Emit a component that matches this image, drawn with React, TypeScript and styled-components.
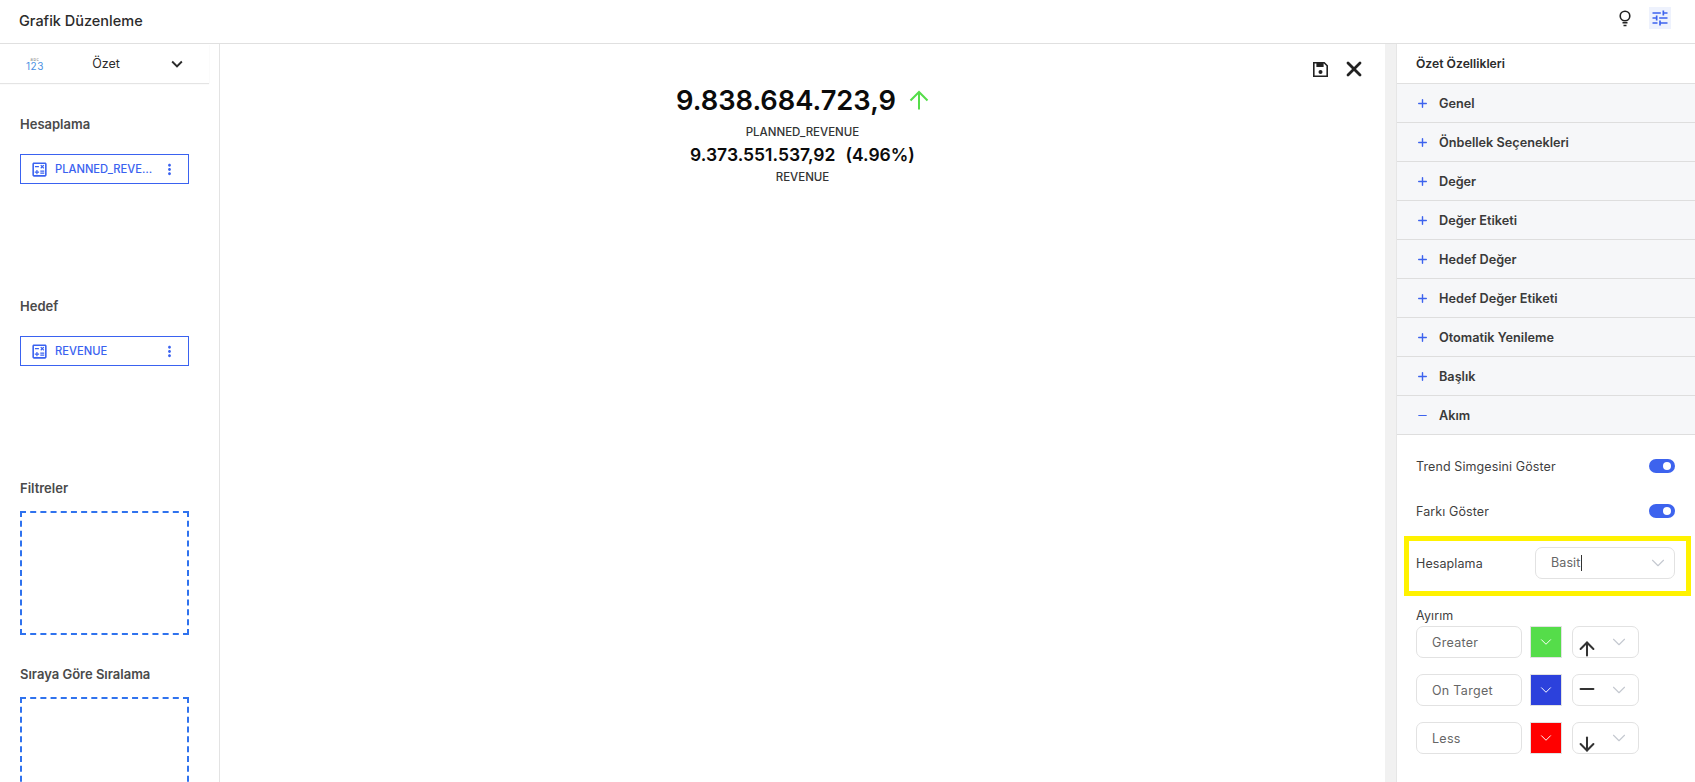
import { ReactNode } from "react";
import styled, { createGlobalStyle } from "styled-components";
import { MdOutlineCalculate, MdOutlineTune, MdMoreVert, MdKeyboardArrowDown } from "react-icons/md";
import { ArrowUp, ArrowDown, Minus, Plus, ChevronDown, X } from "lucide-react";

const GlobalStyle = createGlobalStyle`
    html, body{
        margin:0;
        height:100%;
        overflow:hidden;
        background:#fff;
    }
    *{ box-sizing:border-box; }
    body{
        font-family:"Inter","Liberation Sans",sans-serif;
        color:#333;
    }
`

const Page = styled.div`
    display:flex;
    flex-direction:column;
    width:1695px;
    height:782px;
    overflow:hidden;
`
const Header = styled.header`
    flex:none;
    display:flex;
    align-items:center;
    justify-content:space-between;
    height:44px;
    padding:0 24px 3px 19px;
    border-bottom:1px solid #e0e0e0;
`
const Title = styled.h1`
    margin:0;
    font-size:14.5px;
    font-weight:500;
    color:#2b2b2b;
`
const HeaderIcons = styled.div`
    display:flex;
    align-items:center;
    gap:18px;
    margin-bottom:4px;
    color:#222;
`
const ActiveIcon = styled.span`
    display:flex;
    align-items:center;
    justify-content:center;
    width:22px;
    height:22px;
    background:#eef2fd;
    color:#3d63ee;
`
const Body = styled.div`
    flex:1;
    display:flex;
    min-height:0;
`
const Left = styled.aside`
    flex:none;
    width:220px;
    border-right:1px solid #e3e3e3;
    overflow:hidden;
`
const ChartPicker = styled.div`
    display:flex;
    align-items:center;
    justify-content:space-between;
    width:209px;
    height:39px;
    padding:0 21px 0 24px;
    box-shadow:0 1px 1px #e4e4e4;
    font-size:12.5px;
    color:#2b2b2b;
`
const NumIcon = styled.span`
    display:flex;
    flex-direction:column;
    align-items:center;
    width:22px;
    color:#4a90e2;
    font-size:10px;
    line-height:9px;
    letter-spacing:.6px;
    small{
        font-size:4px;
        line-height:5px;
        color:#777;
    }
`
const Sections = styled.div`
    padding-top:30px;
`
const Section = styled.section<{$h:number}>`
    height:${(p)=>p.$h}px;
    padding:0 30px 0 20px;
`
const SectionTitle = styled.h3`
    margin:0;
    height:22px;
    line-height:22px;
    font-size:13px;
    font-weight:600;
    color:#4a4a4a;
`
const FieldChip = styled.div`
    display:flex;
    align-items:center;
    height:30px;
    margin-top:19px;
    padding:0 10px 0 9px;
    border:1px solid #3a62f0;
    color:#3a62f0;
    font-size:11.2px;
    font-weight:500;
    gap:6px;
    span{
        flex:1;
        min-width:0;
        overflow:hidden;
        white-space:nowrap;
        text-overflow:ellipsis;
    }
`
const DropZone = styled.div`
    height:124px;
    margin-top:12px;
    border:2px dashed #2f72ee;
`
const Center = styled.main`
    flex:1;
    position:relative;
    display:flex;
    flex-direction:column;
    align-items:center;
    padding-top:38px;
    color:#0b0b0b;
`
const ChartTools = styled.div`
    position:absolute;
    top:13px;
    right:19px;
    display:flex;
    align-items:center;
    gap:14px;
    color:#222;
`
const BigValue = styled.div`
    display:flex;
    align-items:center;
    gap:13px;
    height:36px;
    margin-bottom:6px;
    font-size:27.3px;
    font-weight:600;
`
const ValueLabel = styled.div`
    font-size:11.5px;
    font-weight:500;
    line-height:16px;
    color:#333;
`
const SubValue = styled.div`
    display:flex;
    gap:10px;
    font-size:17.5px;
    font-weight:600;
    line-height:29px;
`
const ScrollTrack = styled.div`
    flex:none;
    width:11px;
    background:#f1f1f1;
`
const Right = styled.aside`
    flex:none;
    width:299px;
    overflow:hidden;
    border-left:1px solid #e6e6e6;
`
const PanelTitle = styled.div`
    display:flex;
    align-items:center;
    height:40px;
    padding-left:19px;
    border-bottom:1px solid #e0e0e0;
    font-size:12.2px;
    font-weight:600;
    color:#2b2b2b;
`
const Row = styled.div`
    display:flex;
    align-items:center;
    gap:10px;
    height:39px;
    padding-left:19px;
    background:#f6f7f9;
    border-bottom:1px solid #dedede;
    font-size:12.7px;
    font-weight:600;
    color:#3a3a3a;
    svg{ color:#3d63ee; }
`
const OpenBody = styled.div`
    padding:9px 20px 0 19px;
    font-size:12.5px;
    letter-spacing:.1px;
    color:#3f3f3f;
`
const ToggleRow = styled.div<{$h:number}>`
    display:flex;
    align-items:center;
    justify-content:space-between;
    height:${(p)=>p.$h}px;
`
const Toggle = styled.span`
    position:relative;
    width:26px;
    height:14px;
    border-radius:7px;
    background:#3d63ee;
    &::after{
        content:"";
        position:absolute;
        top:3px;
        right:4px;
        width:8px;
        height:8px;
        border-radius:50%;
        background:#fff;
    }
`
const Highlight = styled.div`
    display:flex;
    align-items:center;
    justify-content:space-between;
    height:60px;
    margin:2px -16px 0 -12px;
    padding:0 11px 6px 7px;
    border:5px solid #fff200;
`
const Input = styled.div<{$w:number}>`
    display:flex;
    align-items:center;
    justify-content:space-between;
    flex:none;
    width:${(p)=>p.$w}px;
    height:32px;
    padding:0 5px 0 15px;
    border:1px solid #e2e2e2;
    border-radius:7px;
    background:#fff;
    color:#666;
    svg.chev{ color:#c4c8d0; }
`
const Caret = styled.i`
    display:inline-block;
    width:1px;
    height:16px;
    margin-left:1px;
    vertical-align:middle;
    background:#333;
`
const SplitLabel = styled.div`
    margin:11px 0 1px;
    line-height:18px;
`
const SplitRow = styled.div`
    display:flex;
    align-items:center;
    gap:8px;
    margin-bottom:16px;
`
const SplitName = styled(Input)`
    letter-spacing:.3px;
`
const Swatch = styled.span<{$c:string}>`
    display:flex;
    align-items:center;
    justify-content:center;
    width:32px;
    height:32px;
    margin-right:2px;
    border:1px solid #e2e2e2;
    background:${(p)=>p.$c};
    color:#fff;
`
const IconSelect = styled(Input)<{$drop:number}>`
    padding:0 8px 0 3px;
    color:#333;
    svg.sym{ transform:translateY(${(p)=>p.$drop}px); }
`

const BulbIcon = ()=>(
    <svg width="12" height="17" viewBox="0 0 12 17" fill="none" stroke="currentColor" strokeWidth="1.6">
        <circle cx="6" cy="6" r="4.8"/>
        <path d="M3.5 12.8h5M4.5 15.5h3"/>
    </svg>
)

const SaveIcon = ()=>(
    <svg width="15" height="15" viewBox="0 0 15 15" fill="currentColor">
        <path d="M.8.8h10.4l3 3v10.4H.8z" fill="none" stroke="currentColor" strokeWidth="1.6"/>
        <rect x="3.4" y="1" width="7.2" height="4"/>
        <circle cx="7.5" cy="10" r="2"/>
    </svg>
)

const TrendArrow = ()=>(
    <svg width="20" height="20" viewBox="0 0 20 20" fill="none" stroke="#55dd4a" strokeWidth="2">
        <path d="M10 19.5V2M1.5 10.5 10 2l8.500 8.500"/>
    </svg>
)

const rows = ["Genel","Önbellek Seçenekleri","Değer","Değer Etiketi","Hedef Değer","Hedef Değer Etiketi","Otomatik Yenileme","Başlık"]

const splits:{label:string, color:string, icon:ReactNode, drop:number}[] = [
    {label:"Greater", color:"#55dd4a", icon:<ArrowUp className="sym" size={22} strokeWidth={2.2}/>, drop:7},
    {label:"On Target", color:"#2c41dc", icon:<Minus className="sym" size={22} strokeWidth={2.2}/>, drop:-1},
    {label:"Less", color:"#ff0000", icon:<ArrowDown className="sym" size={22} strokeWidth={2.2}/>, drop:6},
]

const Field = ({name}:{name:string})=>(
    <FieldChip>
        <MdOutlineCalculate size={19}/>
        <span>{name}</span>
        <MdMoreVert size={17}/>
    </FieldChip>
)

export default function App(){
    return (
        <Page>
            <GlobalStyle/>
            <Header>
                <Title>Grafik Düzenleme</Title>
                <HeaderIcons>
                    <BulbIcon/>
                    <ActiveIcon><MdOutlineTune size={20}/></ActiveIcon>
                </HeaderIcons>
            </Header>
            <Body>
                <Left>
                    <ChartPicker>
                        <NumIcon><small>abc</small>123</NumIcon>
                        <span>Özet</span>
                        <MdKeyboardArrowDown size={22}/>
                    </ChartPicker>
                    <Sections>
                        <Section $h={182}>
                            <SectionTitle>Hesaplama</SectionTitle>
                            <Field name="PLANNED_REVENUE"/>
                        </Section>
                        <Section $h={182}>
                            <SectionTitle>Hedef</SectionTitle>
                            <Field name="REVENUE"/>
                        </Section>
                        <Section $h={186}>
                            <SectionTitle>Filtreler</SectionTitle>
                            <DropZone/>
                        </Section>
                        <Section $h={186}>
                            <SectionTitle>Sıraya Göre Sıralama</SectionTitle>
                            <DropZone/>
                        </Section>
                    </Sections>
                </Left>
                <Center>
                    <ChartTools>
                        <SaveIcon/>
                        <X size={24} strokeWidth={2.8}/>
                    </ChartTools>
                    <BigValue>
                        9.838.684.723,9
                        <TrendArrow/>
                    </BigValue>
                    <ValueLabel>PLANNED_REVENUE</ValueLabel>
                    <SubValue><span>9.373.551.537,92</span><span>(4.96%)</span></SubValue>
                    <ValueLabel>REVENUE</ValueLabel>
                </Center>
                <ScrollTrack/>
                <Right>
                    <PanelTitle>Özet Özellikleri</PanelTitle>
                    {rows.map((r)=>(
                        <Row key={r}><Plus size={13} strokeWidth={2.6}/>{r}</Row>
                    ))}
                    <Row><Minus size={13} strokeWidth={2}/>Akım</Row>
                    <OpenBody>
                        <ToggleRow $h={44}>Trend Simgesini Göster<Toggle/></ToggleRow>
                        <ToggleRow $h={46}>Farkı Göster<Toggle/></ToggleRow>
                        <Highlight>
                            Hesaplama
                            <Input $w={140}>
                                <span>Basit<Caret/></span>
                                <ChevronDown className="chev" size={22} strokeWidth={1.2}/>
                            </Input>
                        </Highlight>
                        <SplitLabel>Ayırım</SplitLabel>
                        {splits.map((s)=>(
                            <SplitRow key={s.label}>
                                <SplitName $w={106}>{s.label}</SplitName>
                                <Swatch $c={s.color}><ChevronDown size={18} strokeWidth={1.3}/></Swatch>
                                <IconSelect $w={67} $drop={s.drop}>
                                    {s.icon}
                                    <ChevronDown className="chev" size={22} strokeWidth={1.2}/>
                                </IconSelect>
                            </SplitRow>
                        ))}
                    </OpenBody>
                </Right>
            </Body>
        </Page>
    )
}
